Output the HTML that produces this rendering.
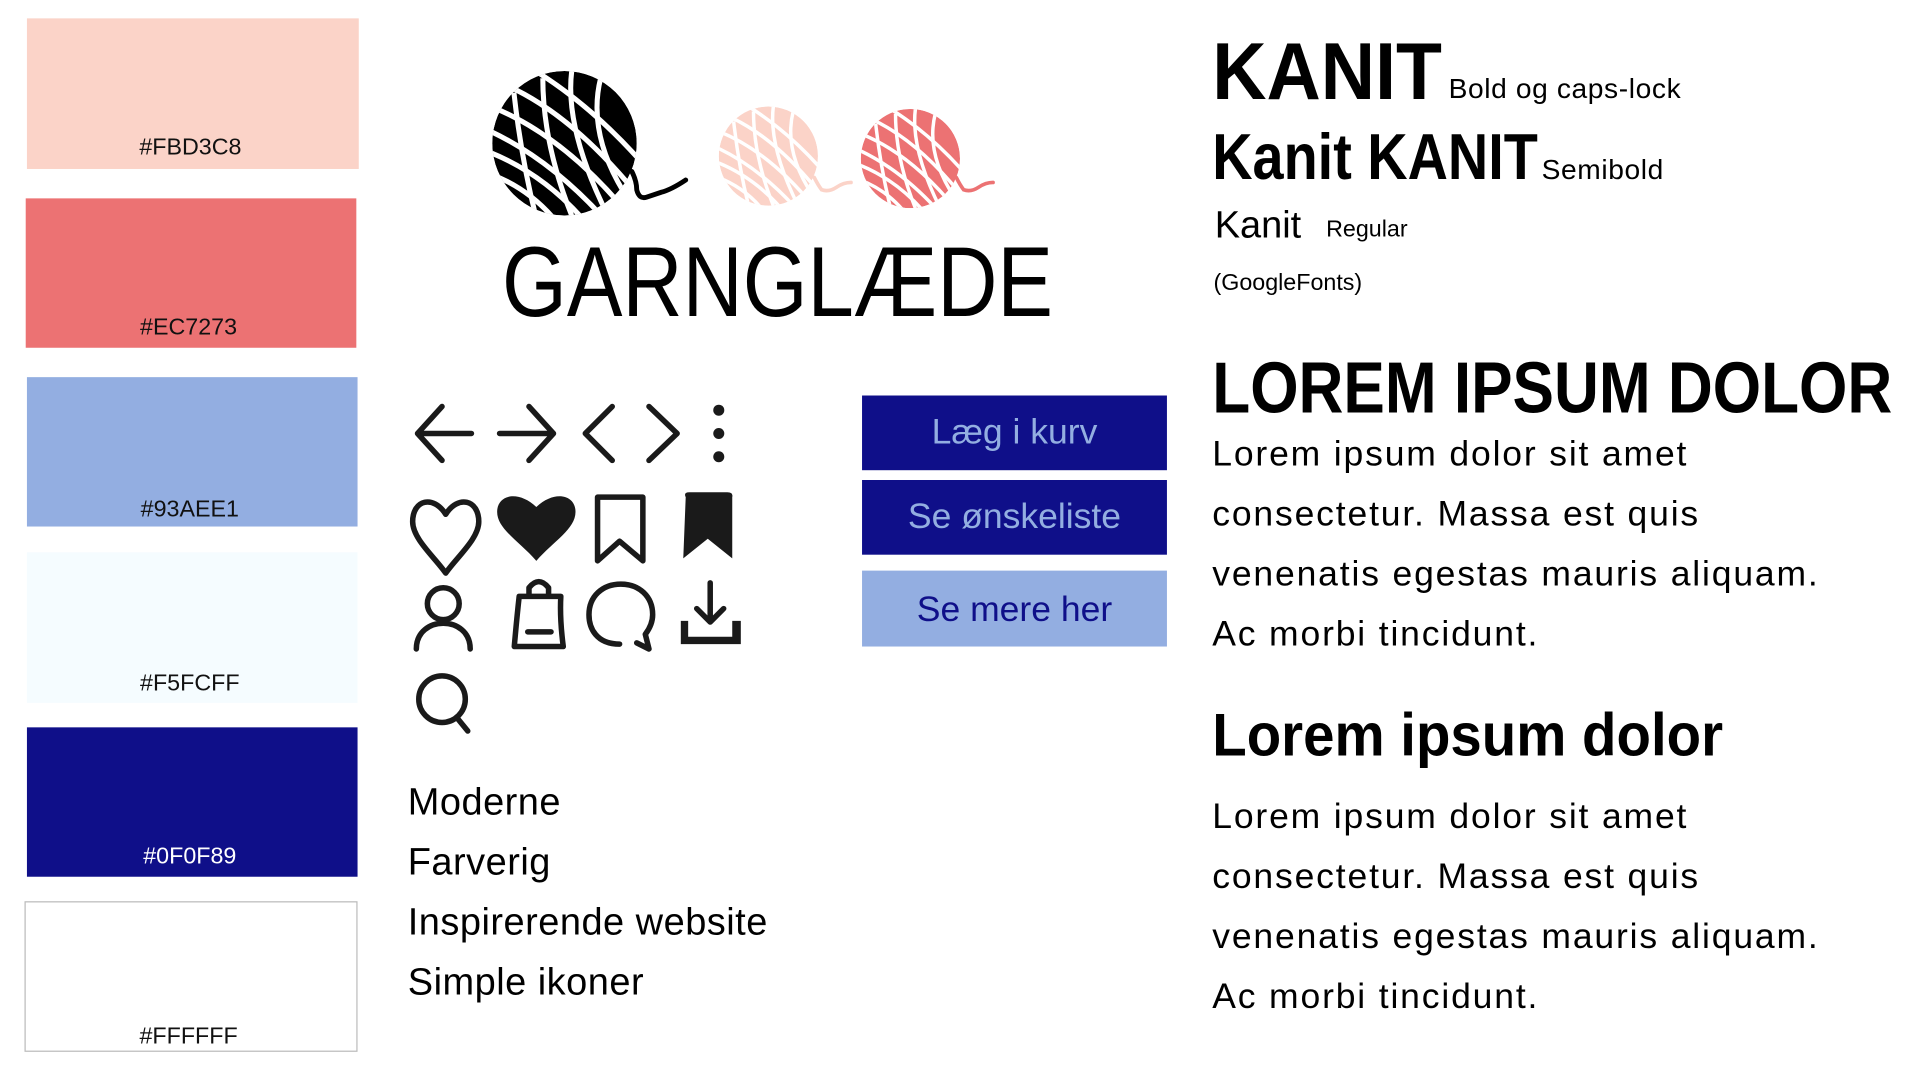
<!DOCTYPE html>
<html><head><meta charset="utf-8"><style>
html,body{margin:0;padding:0;background:#fff;overflow:hidden}
body{width:1920px;height:1080px}
#w{position:absolute;left:0;top:0;width:1568px;height:882px;transform:scale(1.22449);transform-origin:0 0;font-family:"Liberation Sans",sans-serif;color:#000}
.a{position:absolute;white-space:nowrap;line-height:1}
.sw{position:absolute;box-sizing:border-box}
.lab{position:absolute;left:-4px;right:0;text-align:center;font-size:19px;line-height:1;color:#111}
.btn{position:absolute;left:704px;width:249px;font-size:29px;text-align:center;box-sizing:border-box}
.p{position:absolute;left:990px;font-size:29px;line-height:49px;letter-spacing:1.5px;white-space:nowrap}
</style></head><body><div id="w">
<div class="sw" style="left:22px;top:15px;width:271px;height:123px;background:#FBD3C8"><div class="lab" style="top:96px">#FBD3C8</div></div>
<div class="sw" style="left:21px;top:162px;width:270px;height:122px;background:#EC7273"><div class="lab" style="top:96px">#EC7273</div></div>
<div class="sw" style="left:22px;top:308px;width:270px;height:122px;background:#93AEE1"><div class="lab" style="top:99px">#93AEE1</div></div>
<div class="sw" style="left:22px;top:451px;width:270px;height:123px;background:#F5FCFF"><div class="lab" style="top:98px">#F5FCFF</div></div>
<div class="sw" style="left:22px;top:594px;width:270px;height:122px;background:#0F0F89"><div class="lab" style="top:96px;color:#fff">#0F0F89</div></div>
<div class="sw" style="left:20px;top:736px;width:272px;height:123px;background:#fff;border:1px solid #bbb"><div class="lab" style="top:100px">#FFFFFF</div></div>

<svg style="position:absolute;left:0;top:0" width="1568" height="882">
<defs>
<clipPath id="c"><circle cx="50" cy="50" r="50"/></clipPath>
<g id="ball"><g clip-path="url(#c)">
<circle cx="50" cy="50" r="50" fill="currentColor"/>
<g fill="none" stroke="#fff" stroke-width="3.5">
<path d="M-5 40 Q40 60 80 105"/><path d="M-5 55 Q35 70 65 105"/><path d="M-5 70 Q25 80 45 105"/><path d="M0 25 Q50 45 95 100"/>
<path d="M10 10 Q55 30 100 85"/><path d="M30 0 Q70 25 105 65"/>
<path d="M55 0 Q50 40 80 100"/><path d="M75 5 Q65 45 95 90"/><path d="M35 5 Q35 50 55 100"/>
<path d="M15 15 Q20 60 30 100"/>
</g></g></g>
</defs>
<g color="#000" transform="translate(402,58) scale(1.18)"><use href="#ball"/></g>
<path d="M516 140 q4 8 4 15 q2 8 8 6 q6 -2 12 -4 q8 -2 20 -10" fill="none" stroke="#000" stroke-width="4" stroke-linecap="round"/>
<g color="#FBD3C8" transform="translate(587,87) scale(0.81)"><use href="#ball"/></g>
<path d="M665 145 q3 6 6 10 q6 2 12 -2 q6 -4 12 -4" fill="none" stroke="#FBD3C8" stroke-width="3" stroke-linecap="round"/>
<g color="#EC7273" transform="translate(703,89) scale(0.81)"><use href="#ball"/></g>
<path d="M781 145 q3 6 6 10 q6 2 12 -2 q6 -4 12 -4" fill="none" stroke="#EC7273" stroke-width="3" stroke-linecap="round"/>

<g fill="none" stroke="#1a1a1a" stroke-width="4.5" stroke-linecap="round" stroke-linejoin="round">
<path d="M385 354 H341 M361 332 L341 354 L361 376"/>
<path d="M408 354 H452 M432 332 L452 354 L432 376"/>
<path d="M500 332 L478 354 L500 376"/>
<path d="M530 332 L553 354 L530 376"/>
<path d="M364 420 C354 404 337 408 337 426 C337 440 355 455 364 468 C373 455 391 440 391 426 C391 408 374 404 364 420 Z"/>
<path d="M488 406 H525 V458 L506 442 L488 458 Z"/>
<circle cx="362" cy="493" r="13"/><path d="M340 530 C340 502 384 502 384 530"/>
<path d="M424 487 H458 Q457 505 460 528 H420 Q422 505 424 487 Z M432 487 V480 Q440 470 448 480 V487"/><path d="M431 516 H450"/>
<path d="M506 526 C487 526 481 513 481 502 C481 487 492 477 507 477 C522 477 533 487 533 502 C533 509 530 514 527 518 L530 530 L520 525"/>
<path d="M580 476 V508 M569 497 L580 508 L591 497"/>
<circle cx="361" cy="571" r="19"/><path d="M373 586 L382 597"/>
</g>
<g fill="#1a1a1a">
<circle cx="587" cy="335" r="4.5"/><circle cx="587" cy="354" r="4.5"/><circle cx="587" cy="373" r="4.5"/>
<path d="M438 458 C424 442 406 432 406 418 C406 404 423 400 438 414 C453 400 470 404 470 418 C470 432 452 442 438 458 Z"/>
<path d="M560 406 Q558 402 563 402 H594 Q599 402 598 406 V456 L578 440 L558 456 Z"/>
<path d="M556 507 H562 V520 H598 V507 H605 V526 H556 Z"/>
</g>
</svg>

<div class="a" style="left:410px;top:191px;font-size:81px;transform:scaleX(0.84);transform-origin:0 0">GARNGLÆDE</div>

<div class="a" style="left:333px;top:639px;font-size:31px;letter-spacing:0.4px">Moderne</div>
<div class="a" style="left:333px;top:688px;font-size:31px;letter-spacing:0.4px">Farverig</div>
<div class="a" style="left:333px;top:737px;font-size:31px;letter-spacing:0.4px">Inspirerende website</div>
<div class="a" style="left:333px;top:786px;font-size:31px;letter-spacing:0.4px">Simple ikoner</div>

<div class="btn" style="top:323px;height:61px;line-height:61px;background:#0F0F89;color:#93AEE1">Læg i kurv</div>
<div class="btn" style="top:392px;height:61px;line-height:61px;background:#0F0F89;color:#93AEE1">Se ønskeliste</div>
<div class="btn" style="top:466px;height:62px;line-height:64px;background:#93AEE1;color:#0F0F89">Se mere her</div>

<div class="a" style="left:990px;top:25px;font-size:66px;font-weight:bold;transform:scaleX(0.93);transform-origin:0 0">KANIT</div>
<div class="a" style="left:1183px;top:61px;font-size:23px;letter-spacing:0.5px">Bold og caps-lock</div>
<div class="a" style="left:990px;top:102px;font-size:53px;font-weight:600;transform:scaleX(0.86);transform-origin:0 0">Kanit KANIT</div>
<div class="a" style="left:1259px;top:127px;font-size:23px;letter-spacing:0.5px">Semibold</div>
<div class="a" style="left:992px;top:168px;font-size:31px">Kanit</div>
<div class="a" style="left:1083px;top:178px;font-size:19px">Regular</div>
<div class="a" style="left:991px;top:222px;font-size:19px">(GoogleFonts)</div>

<div class="a" style="left:990px;top:288px;font-size:59px;font-weight:bold;transform:scaleX(0.86);transform-origin:0 0">LOREM IPSUM DOLOR</div>
<div class="p" style="top:347px">Lorem ipsum dolor sit amet<br>consectetur. Massa est quis<br>venenatis egestas mauris aliquam.<br>Ac morbi tincidunt.</div>
<div class="a" style="left:990px;top:577px;font-size:49px;font-weight:600;transform:scaleX(0.94);transform-origin:0 0">Lorem ipsum dolor</div>
<div class="p" style="top:643px">Lorem ipsum dolor sit amet<br>consectetur. Massa est quis<br>venenatis egestas mauris aliquam.<br>Ac morbi tincidunt.</div>
</div></body></html>
